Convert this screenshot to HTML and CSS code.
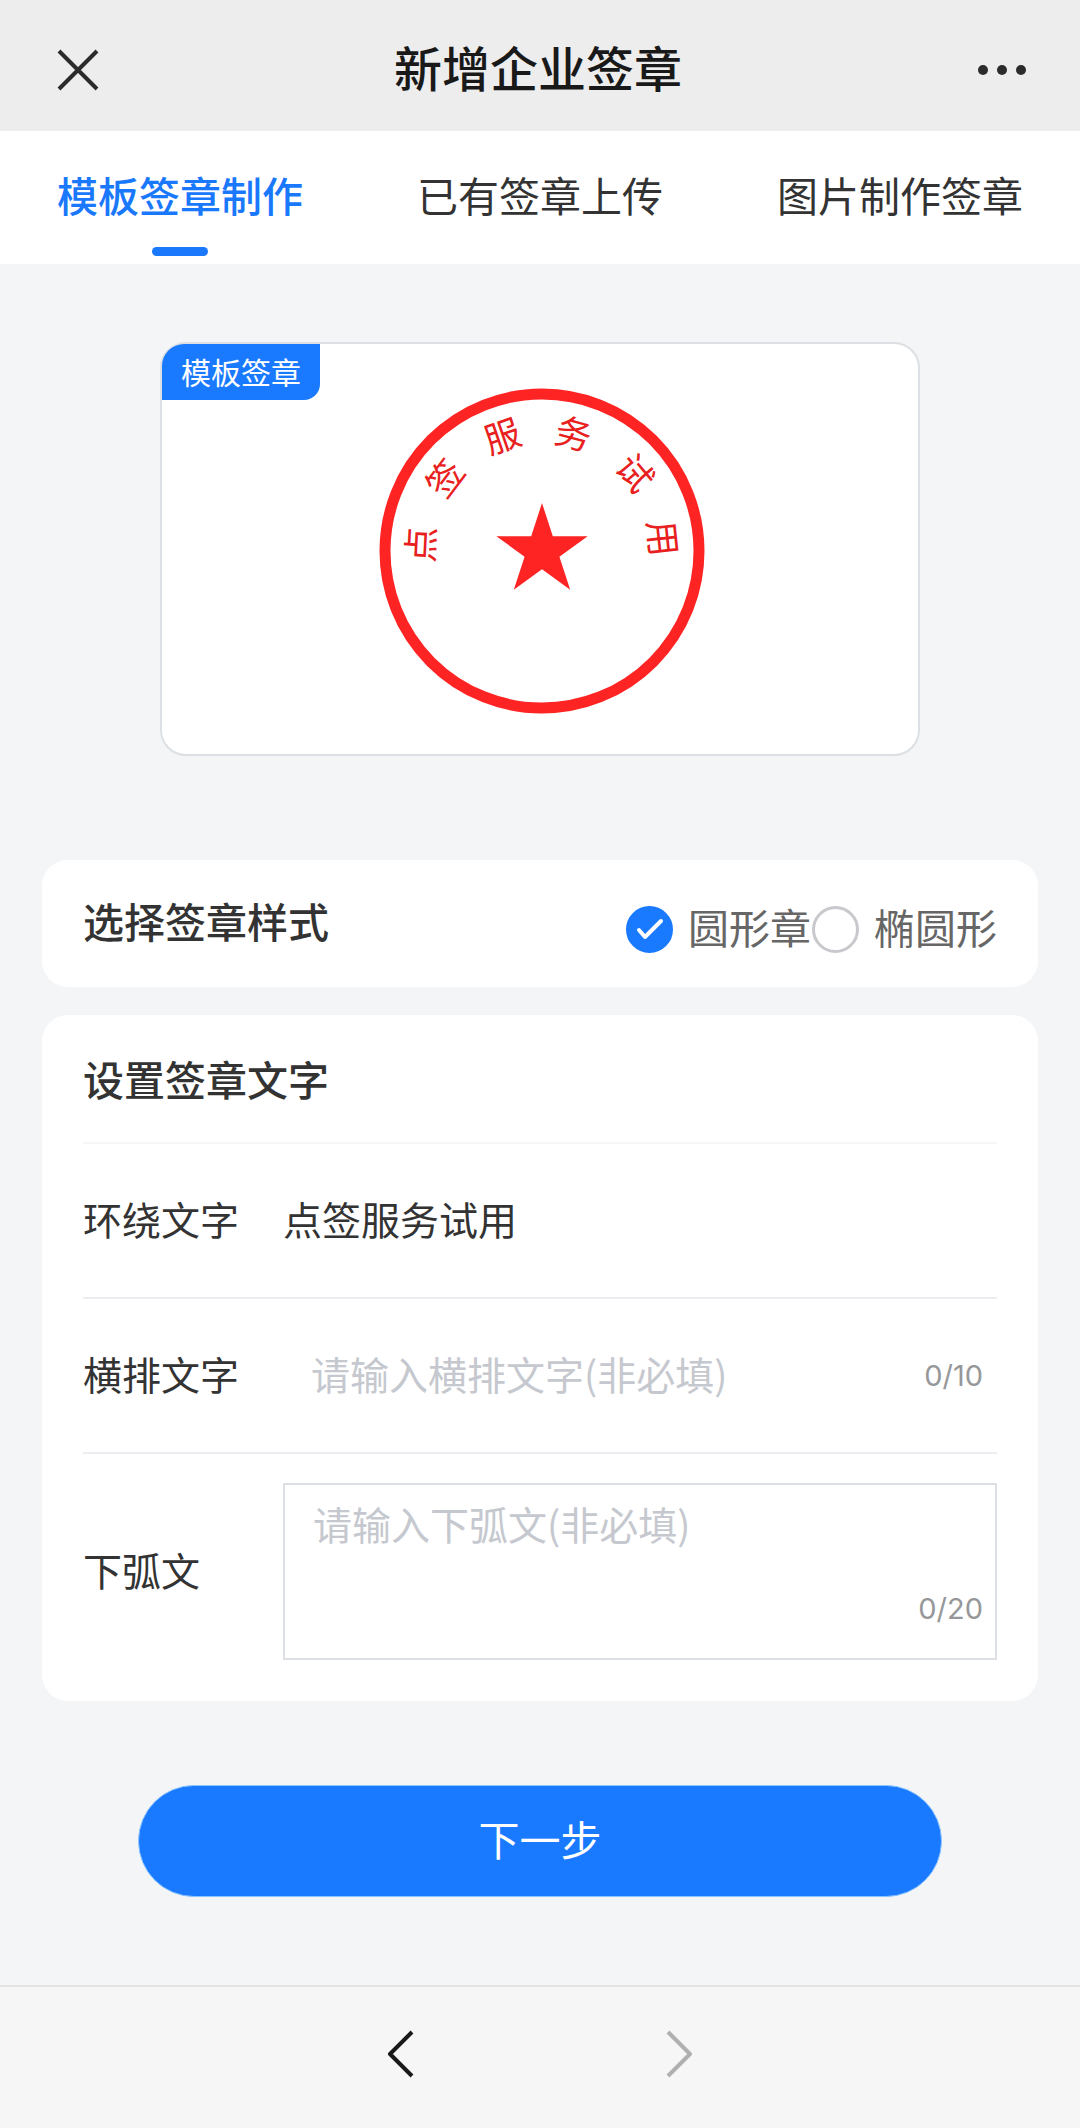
FILE: index.html
```html
<!DOCTYPE html>
<html lang="zh-CN">
<head>
<meta charset="utf-8">
<meta name="viewport" content="width=device-width, initial-scale=1">
<title>新增企业签章</title>
<link rel="stylesheet" href="styles.css">
</head>
<body>
<header class="navbar">
  <button class="icon-button" type="button" aria-label="关闭">
    <svg width="42" height="42" viewBox="0 0 42 42" fill="none" stroke="#2b2b2b" stroke-width="4"><path d="M2 2 40 40M40 2 2 40"/></svg>
  </button>
  <h1 class="navbar-title">新增企业签章</h1>
  <button class="icon-button" type="button" aria-label="更多">
    <svg width="50" height="12" viewBox="0 0 50 12" fill="#2b2b2b"><circle cx="6" cy="6" r="5"/><circle cx="25" cy="6" r="5"/><circle cx="44" cy="6" r="5"/></svg>
  </button>
</header>

<nav class="tabs">
  <a class="tab tab-active" href="#template" aria-current="page">模板签章制作</a>
  <a class="tab" href="#upload">已有签章上传</a>
  <a class="tab" href="#picture">图片制作签章</a>
</nav>

<main class="content">
  <section class="preview">
    <span class="preview-tag">模板签章</span>
    <svg class="seal" viewBox="-163 -163 326 326" role="img" aria-label="点签服务试用">
      <circle r="157" fill="none" stroke="#ff2424" stroke-width="11"/>
      <polygon fill="#ff2424" points="0,-48 10.8,-14.8 45.7,-14.8 17.4,5.7 28.2,38.8 0,18.3 -28.2,38.8 -17.4,5.7 -45.7,-14.8 -10.8,-14.8"/>
      <g class="seal-text">
        <text transform="rotate(-87)" y="-108">点</text>
        <text transform="rotate(-53)" y="-108">签</text>
        <text transform="rotate(-19)" y="-108">服</text>
        <text transform="rotate(15)" y="-108">务</text>
        <text transform="rotate(50)" y="-108">试</text>
        <text transform="rotate(84)" y="-108">用</text>
      </g>
    </svg>
  </section>

  <form class="form" action="#">
    <section class="card style-card">
      <h2 class="card-title" id="style-title">选择签章样式</h2>
      <div class="options" role="radiogroup" aria-labelledby="style-title">
        <label class="option">
          <span class="radio">
            <input class="radio-input" type="radio" name="shape" value="round" checked>
            <svg class="radio-check" viewBox="0 0 47 47" fill="none" stroke="#fff" stroke-width="4" stroke-linecap="round" stroke-linejoin="round"><path d="M13 24 19 31 35 15"/></svg>
          </span>
          <span class="option-text">圆形章</span>
        </label>
        <label class="option">
          <span class="radio">
            <input class="radio-input" type="radio" name="shape" value="ellipse">
          </span>
          <span class="option-text">椭圆形</span>
        </label>
      </div>
    </section>

    <section class="card">
      <h2 class="card-title text-title">设置签章文字</h2>
      <div class="row">
        <label class="row-label" for="around">环绕文字</label>
        <input class="field" id="around" type="text" value="点签服务试用">
      </div>
      <div class="row">
        <label class="row-label" for="horizontal">横排文字</label>
        <input class="field field-inset" id="horizontal" type="text" maxlength="10" placeholder="请输入横排文字(非必填)">
        <span class="counter">0/10</span>
      </div>
      <div class="row row-area">
        <label class="row-label" for="arc">下弧文</label>
        <div class="area-box">
          <textarea class="area" id="arc" maxlength="20" rows="1" placeholder="请输入下弧文(非必填)"></textarea>
          <span class="counter">0/20</span>
        </div>
      </div>
    </section>

    <button class="submit" type="submit">下一步</button>
  </form>
</main>

<footer class="toolbar">
  <button class="icon-button" type="button" aria-label="后退">
    <svg width="28" height="48" viewBox="0 0 28 48" fill="none" stroke="#191919" stroke-width="4" stroke-linejoin="round"><path d="M26 2 4 24 26 46"/></svg>
  </button>
  <button class="icon-button" type="button" aria-label="前进" disabled>
    <svg width="28" height="48" viewBox="0 0 28 48" fill="none" stroke="#b0b0b0" stroke-width="4" stroke-linejoin="round"><path d="M2 2 24 24 2 46"/></svg>
  </button>
</footer>
</body>
</html>
```
FILE: styles.css
```css
* {
  box-sizing: border-box;
}

body {
  display: flex;
  flex-direction: column;
  min-height: 100vh;
  margin: 0;
  background: #f3f5f7;
  color: #333;
  font-family: "Noto Sans CJK SC", sans-serif;
  font-size: 39px;
}

button,
input,
textarea {
  margin: 0;
  padding: 0;
  border: 0;
  background: none;
  color: inherit;
  font: inherit;
}

.icon-button {
  display: flex;
}

.navbar {
  display: flex;
  align-items: center;
  justify-content: space-between;
  height: 131px;
  padding: 8px 53px 0 57px;
  background: #ededed;
}

.navbar-title {
  margin: 0;
  padding-bottom: 7px;
  color: #191919;
  font-size: 48px;
  font-weight: 500;
  line-height: 64px;
}

.tabs {
  display: grid;
  grid-template-columns: repeat(3, 1fr);
  background: #fff;
}

.tab {
  display: flex;
  flex-direction: column;
  align-items: center;
  height: 133px;
  padding-top: 33px;
  color: #333;
  font-size: 41px;
  line-height: 60px;
  text-decoration: none;
}

.tab-active {
  color: #1a78fc;
  font-weight: 500;
}

.tab-active::after {
  content: "";
  width: 56px;
  height: 9px;
  margin-top: 23px;
  border-radius: 5px;
  background: #1a78fc;
}

.content {
  flex: 1;
  padding: 78px 42px;
}

.preview {
  position: relative;
  display: flex;
  justify-content: center;
  width: 760px;
  max-width: 100%;
  margin: 0 auto 104px;
  padding: 44px 0 40px 4px;
  border: 2px solid #dcdfe3;
  border-radius: 26px;
  background: #fff;
}

.preview-tag {
  position: absolute;
  top: 0;
  left: 0;
  padding: 0 19px 2px;
  border-radius: 22px 0 16px;
  background: #1a7aff;
  color: #fff;
  font-size: 30px;
  line-height: 54px;
}

.seal {
  width: 326px;
  height: 326px;
}

.seal-text {
  fill: #e82020;
  font-size: 36px;
  text-anchor: middle;
}

.form {
  display: flex;
  flex-direction: column;
  gap: 28px;
}

.card {
  padding: 0 41px;
  border-radius: 26px;
  background: #fff;
}

.card-title {
  margin: 0;
  font-size: 41px;
  font-weight: 500;
  line-height: 127px;
}

.style-card {
  display: flex;
  align-items: center;
  justify-content: space-between;
}

.style-card .card-title {
  padding-bottom: 7px;
  line-height: 120px;
}

.options {
  display: flex;
  gap: 1px;
  padding-top: 12px;
  color: #666;
  font-size: 41px;
  line-height: 60px;
}

.option {
  display: flex;
  align-items: center;
  gap: 15px;
}

.option-text {
  padding-bottom: 8px;
}

.radio {
  position: relative;
  display: flex;
}

.radio-input {
  width: 47px;
  height: 47px;
  border: 3px solid #c8c9cc;
  border-radius: 50%;
  appearance: none;
}

.radio-input:checked {
  border-color: #1a7aff;
  background: #1a7aff;
}

.radio-check {
  position: absolute;
  inset: 0;
}

.text-title {
  border-bottom: 2px solid #f6f6f7;
}

.row {
  display: flex;
  align-items: center;
  min-height: 155px;
  border-bottom: 2px solid #ebedf0;
}

.row-label {
  flex: none;
  width: 200px;
  padding-bottom: 5px;
}

.field {
  flex: 1;
  min-width: 0;
  height: 65px;
  padding-bottom: 5px;
}

.field-inset {
  padding-left: 28px;
}

::placeholder {
  color: #c5c8ce;
  opacity: 1;
}

.counter {
  padding-right: 14px;
  color: #969799;
  font-family: Inter, sans-serif;
  font-size: 29px;
  line-height: 36px;
}

.row-area {
  padding: 29px 0 41px;
  border-bottom: 0;
}

.area-box {
  display: flex;
  flex: 1;
  flex-direction: column;
  height: 177px;
  padding-bottom: 31px;
  border: 2px solid #dcdfe3;
}

.area {
  flex: 1;
  padding: 8px 28px 0;
  line-height: 60px;
  resize: none;
}

.area-box .counter {
  align-self: flex-end;
  padding-right: 12px;
}

.submit {
  width: 804px;
  max-width: 100%;
  margin: 56px auto 0;
  padding-bottom: 6px;
  border: 1px solid #8cc4ff;
  border-radius: 56px;
  background: #1a7aff;
  color: #fff;
  font-size: 41px;
  line-height: 104px;
}

.toolbar {
  display: flex;
  justify-content: center;
  gap: 252px;
  padding: 43px 0 50px;
  border-top: 2px solid #e2e3e4;
  background: #f6f6f6;
}
```
